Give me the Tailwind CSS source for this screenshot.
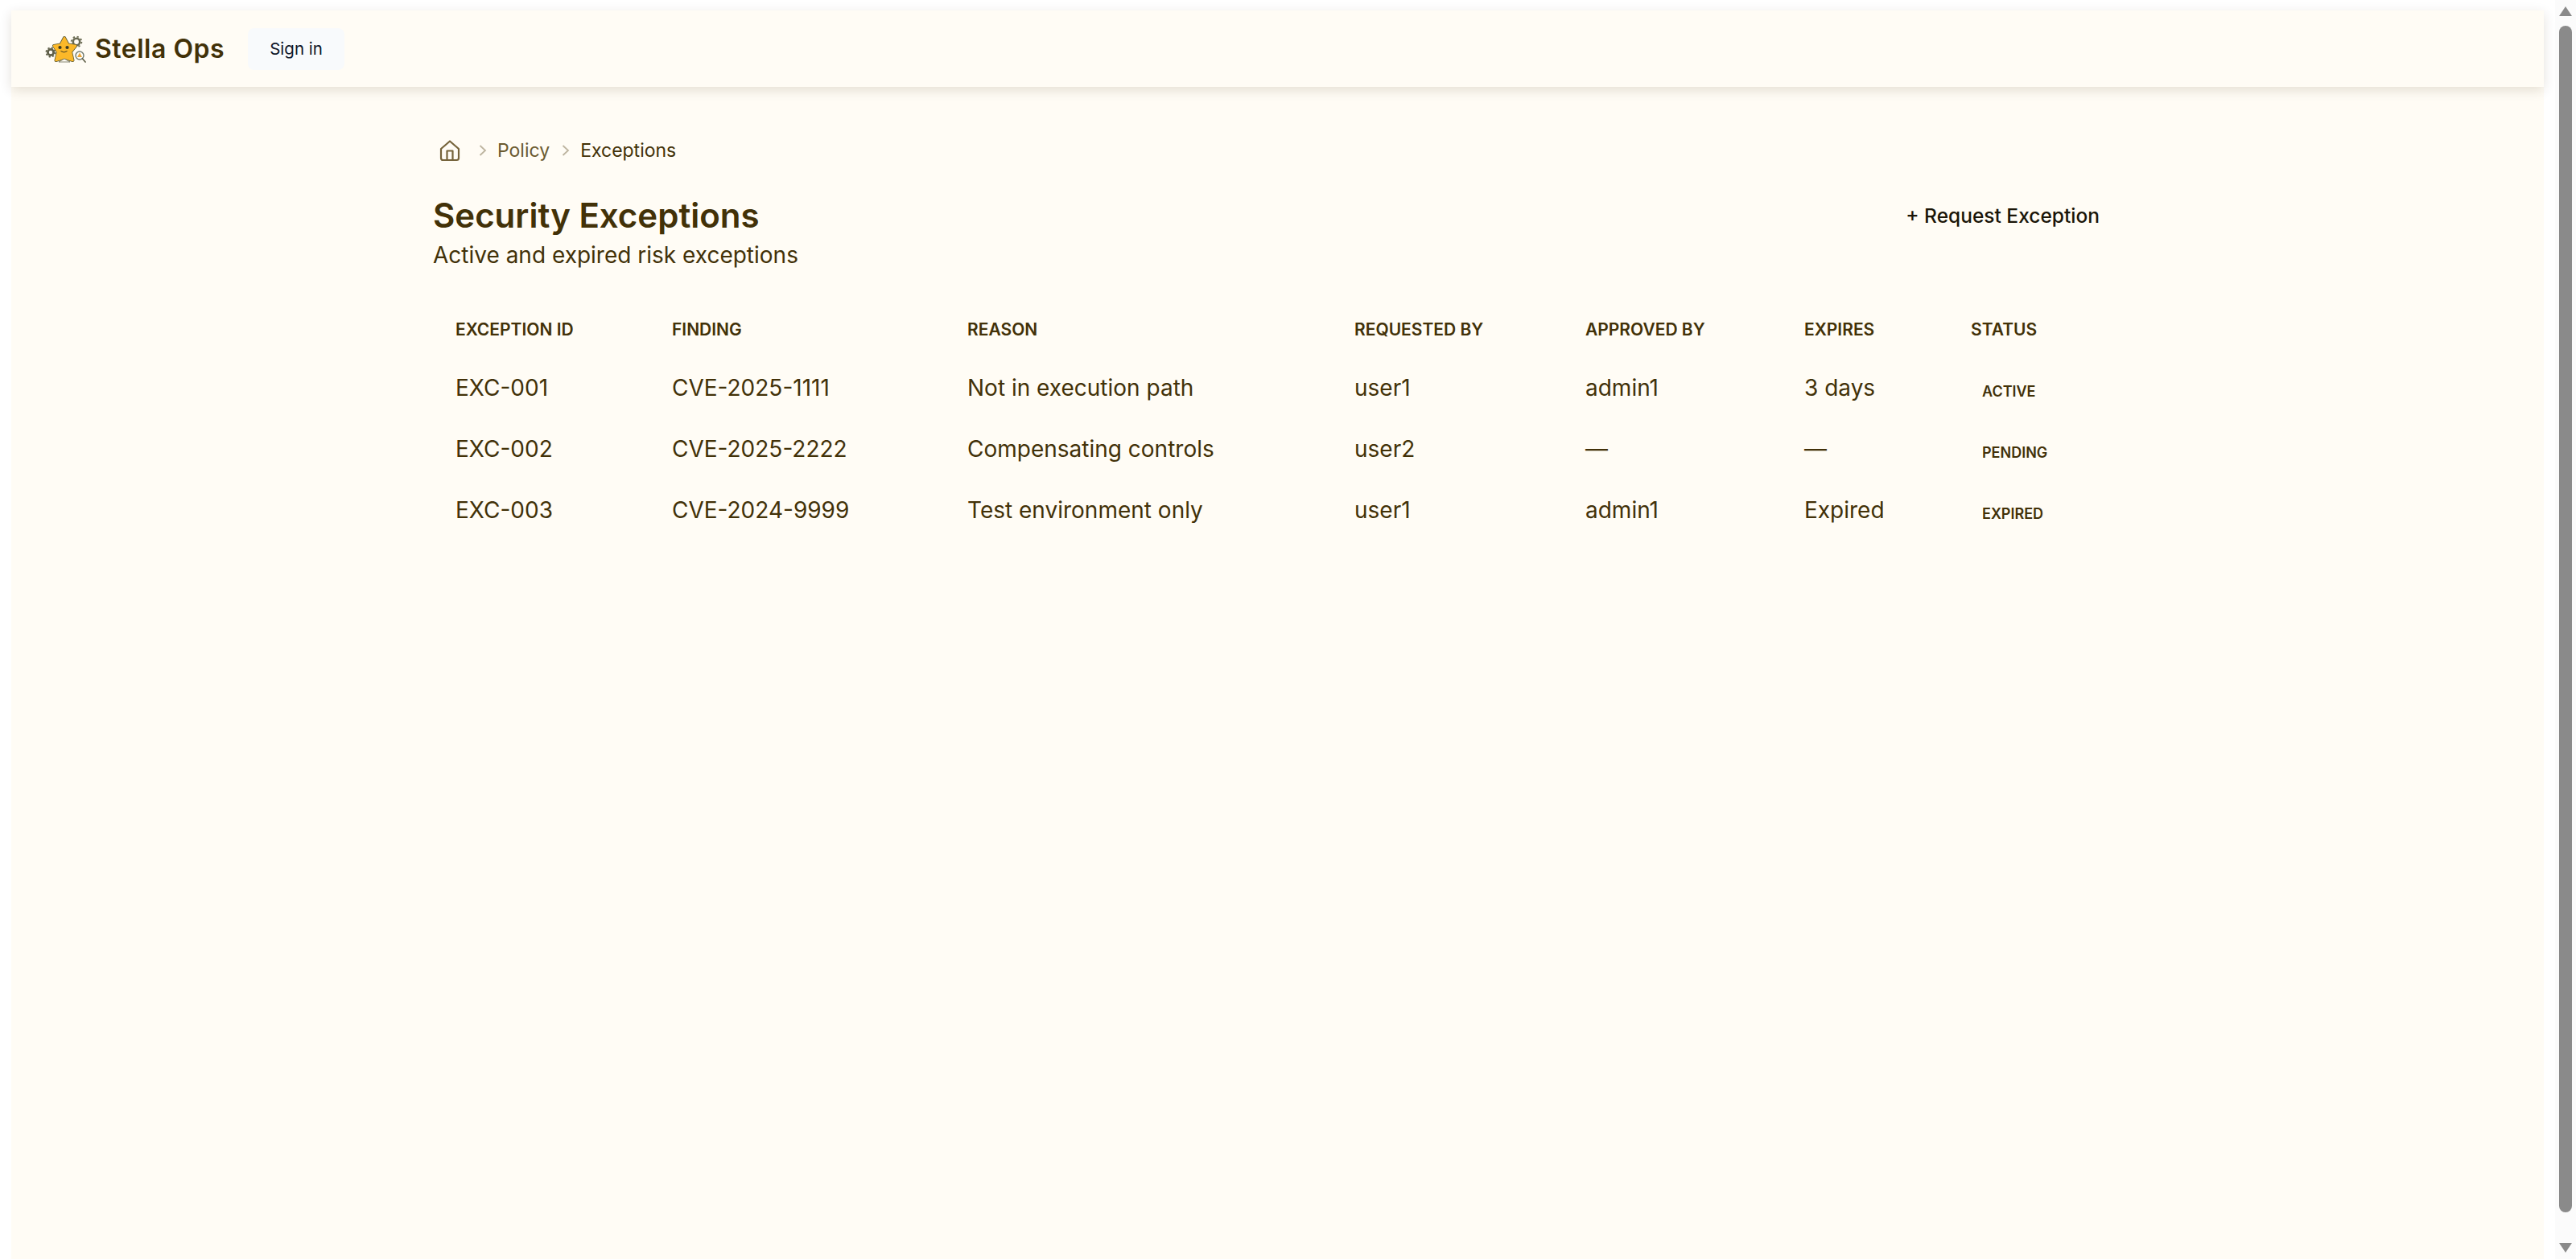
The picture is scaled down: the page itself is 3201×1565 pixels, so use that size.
<!DOCTYPE html>
<html lang="en">
<head>
    <meta charset="UTF-8">
    <meta name="viewport" content="width=device-width, initial-scale=1.0">
    <title>Security Exceptions - Stella Ops</title>
    <script src="https://cdn.jsdelivr.net/npm/@tailwindcss/browser@4"></script>
</head>
<body class="bg-white font-['Inter',sans-serif] text-[#423108] overflow-hidden">
    <div class="flex h-screen w-full">
        <!-- Page panel -->
        <div class="flex-1 min-w-0 pt-[13px] pl-[14px] pr-[14px]">
            <div class="h-full bg-[#fffcf5]">
                <!-- Header -->
                <header class="flex items-center h-[95px] pt-[1px] pl-[41px] bg-[#fffcf5] shadow-[0_4px_14px_rgba(61,46,10,0.14)]">
                    <svg class="w-[52px] h-[36px] mr-[11px]" viewBox="0 0 52 36" aria-label="Stella Ops logo">
                        <!-- left gear -->
                        <circle cx="8" cy="22" r="3.6" fill="#fffcf5" stroke="#5f5f48" stroke-width="2.8"/>
                        <circle cx="8" cy="22" r="5.6" fill="none" stroke="#5f5f48" stroke-width="1.8" stroke-dasharray="2.2 2.2"/>
                        <!-- right gear -->
                        <circle cx="40" cy="9" r="4.2" fill="#fffcf5" stroke="#6a6a52" stroke-width="2.6"/>
                        <circle cx="40" cy="9" r="6.4" fill="none" stroke="#6a6a52" stroke-width="1.8" stroke-dasharray="2.2 2.8"/>
                        <!-- star -->
                        <path d="M25 4 L29.5 12.5 L39 14 L33 21.5 L35.5 32 L25 28.5 L14.5 32 L17 21.5 L12 14 L20.5 12.5 Z" fill="#5c5a34" stroke="#5c5a34" stroke-width="4" stroke-linejoin="round"/>
                        <path d="M25 4 L29.5 12.5 L39 14 L33 21.5 L35.5 32 L25 28.5 L14.5 32 L17 21.5 L12 14 L20.5 12.5 Z" fill="#fbb829" stroke="#fbb829" stroke-width="2.4" stroke-linejoin="round"/>
                        <path d="M18 34 L25 30 L32 34 Z" fill="#fffcf5" stroke="#6a6a52" stroke-width="0.8" stroke-linejoin="round"/>
                        <circle cx="19.5" cy="16" r="2.1" fill="#3d3a20"/>
                        <circle cx="28.5" cy="16" r="2.1" fill="#3d3a20"/>
                        <path d="M20.5 20.5 Q24.5 23.5 28.5 20.5" fill="none" stroke="#3d3a20" stroke-width="1"/>
                        <!-- magnifier -->
                        <circle cx="44" cy="26" r="5" fill="#fffcf5" stroke="#6f7a70" stroke-width="1.4"/>
                        <path d="M44 22.5 L47 28 L41 28 Z" fill="#e8a53a"/>
                        <path d="M47.5 30 L51 34" stroke="#5f5f48" stroke-width="1.7" stroke-linecap="round"/>
                    </svg>
                    <span class="text-[32px] font-semibold tracking-[0.5px] leading-none text-[#423108]">Stella Ops</span>
                    <button class="ml-[29px] w-[120px] h-[52px] rounded-[8px] bg-[#f8fafc] text-[#0f172a] text-[20.5px]">Sign in</button>
                </header>

                <main class="w-[2071px] ml-[524px]">
                    <!-- Breadcrumb -->
                    <nav class="flex items-center h-[30px] mt-[64px] text-[23px] leading-none">
                        <svg class="w-[26px] h-[28px] ml-[8px] text-[#75633a]" viewBox="0 0 26 28" fill="none" stroke="currentColor" stroke-width="2.2" stroke-linejoin="round" aria-label="Home">
                            <path d="M2 12 L13 2.5 L24 12 V23.5 Q24 26 21.5 26 H4.5 Q2 26 2 23.5 Z"/>
                            <path d="M9.5 26 V14.5 H16.5 V26"/>
                        </svg>
                        <svg class="w-[12px] h-[16px] ml-[22px] text-[#bdb49f]" viewBox="0 0 12 16" fill="none" stroke="currentColor" stroke-width="1.8"><path d="M2.5 2 L9 8 L2.5 14"/></svg>
                        <span class="ml-[12px] text-[#6b5a30]">Policy</span>
                        <svg class="w-[12px] h-[16px] ml-[14px] text-[#bdb49f]" viewBox="0 0 12 16" fill="none" stroke="currentColor" stroke-width="1.8"><path d="M2.5 2 L9 8 L2.5 14"/></svg>
                        <span class="ml-[12px] text-[#423108]">Exceptions</span>
                    </nav>

                    <!-- Title -->
                    <div class="flex items-start justify-between mt-[42px]">
                        <div>
                            <h1 class="text-[42px] leading-[48px] font-semibold">Security Exceptions</h1>
                            <p class="text-[28px] leading-[36px] mt-[7px]">Active and expired risk exceptions</p>
                        </div>
                        <button class="mt-[7px] text-[24.5px] leading-[34px] font-medium text-[#1a1508]">+ Request Exception</button>
                    </div>

                    <!-- Table -->
                    <table class="w-full table-fixed mt-[40px] text-left">
                        <colgroup>
                            <col class="w-[269px]"><col class="w-[367px]"><col class="w-[481px]"><col class="w-[287px]"><col class="w-[272px]"><col class="w-[207px]"><col>
                        </colgroup>
                        <thead>
                            <tr class="h-[69px] text-[21px] font-semibold uppercase">
                                <th class="pl-[28px] font-semibold">Exception ID</th>
                                <th class="pl-[28px] font-semibold">Finding</th>
                                <th class="pl-[28px] font-semibold">Reason</th>
                                <th class="pl-[28px] font-semibold">Requested By</th>
                                <th class="pl-[28px] font-semibold">Approved By</th>
                                <th class="pl-[28px] font-semibold">Expires</th>
                                <th class="pl-[28px] font-semibold">Status</th>
                            </tr>
                        </thead>
                        <tbody class="text-[28px]">
                            <tr class="h-[76px]">
                                <td class="pl-[28px]">EXC-001</td>
                                <td class="pl-[28px]">CVE-2025-1111</td>
                                <td class="pl-[28px]">Not in execution path</td>
                                <td class="pl-[28px]">user1</td>
                                <td class="pl-[28px]">admin1</td>
                                <td class="pl-[28px]">3 days</td>
                                <td class="pl-[42px]"><span class="relative top-[1px] text-[18px] font-semibold uppercase">Active</span></td>
                            </tr>
                            <tr class="h-[76px]">
                                <td class="pl-[28px]">EXC-002</td>
                                <td class="pl-[28px]">CVE-2025-2222</td>
                                <td class="pl-[28px]">Compensating controls</td>
                                <td class="pl-[28px]">user2</td>
                                <td class="pl-[28px]">—</td>
                                <td class="pl-[28px]">—</td>
                                <td class="pl-[42px]"><span class="relative top-[1px] text-[18px] font-semibold uppercase">Pending</span></td>
                            </tr>
                            <tr class="h-[76px]">
                                <td class="pl-[28px]">EXC-003</td>
                                <td class="pl-[28px]">CVE-2024-9999</td>
                                <td class="pl-[28px]">Test environment only</td>
                                <td class="pl-[28px]">user1</td>
                                <td class="pl-[28px]">admin1</td>
                                <td class="pl-[28px]">Expired</td>
                                <td class="pl-[42px]"><span class="relative top-[1px] text-[18px] font-semibold uppercase">Expired</span></td>
                            </tr>
                        </tbody>
                    </table>
                </main>
            </div>
        </div>

        <!-- Scrollbar -->
        <div class="relative w-[26px] h-full bg-[#fbfbfb]">
            <div class="absolute left-[5px] top-[8px] w-0 h-0 border-x-[8px] border-x-transparent border-b-[12px] border-b-[#8a8a8a]"></div>
            <div class="absolute left-[5px] top-[32px] w-[16px] h-[1475px] rounded-full bg-[#8a8a8a]"></div>
            <div class="absolute left-[5px] top-[1545px] w-0 h-0 border-x-[8px] border-x-transparent border-t-[12px] border-t-[#8a8a8a]"></div>
        </div>
    </div>
</body>
</html>
